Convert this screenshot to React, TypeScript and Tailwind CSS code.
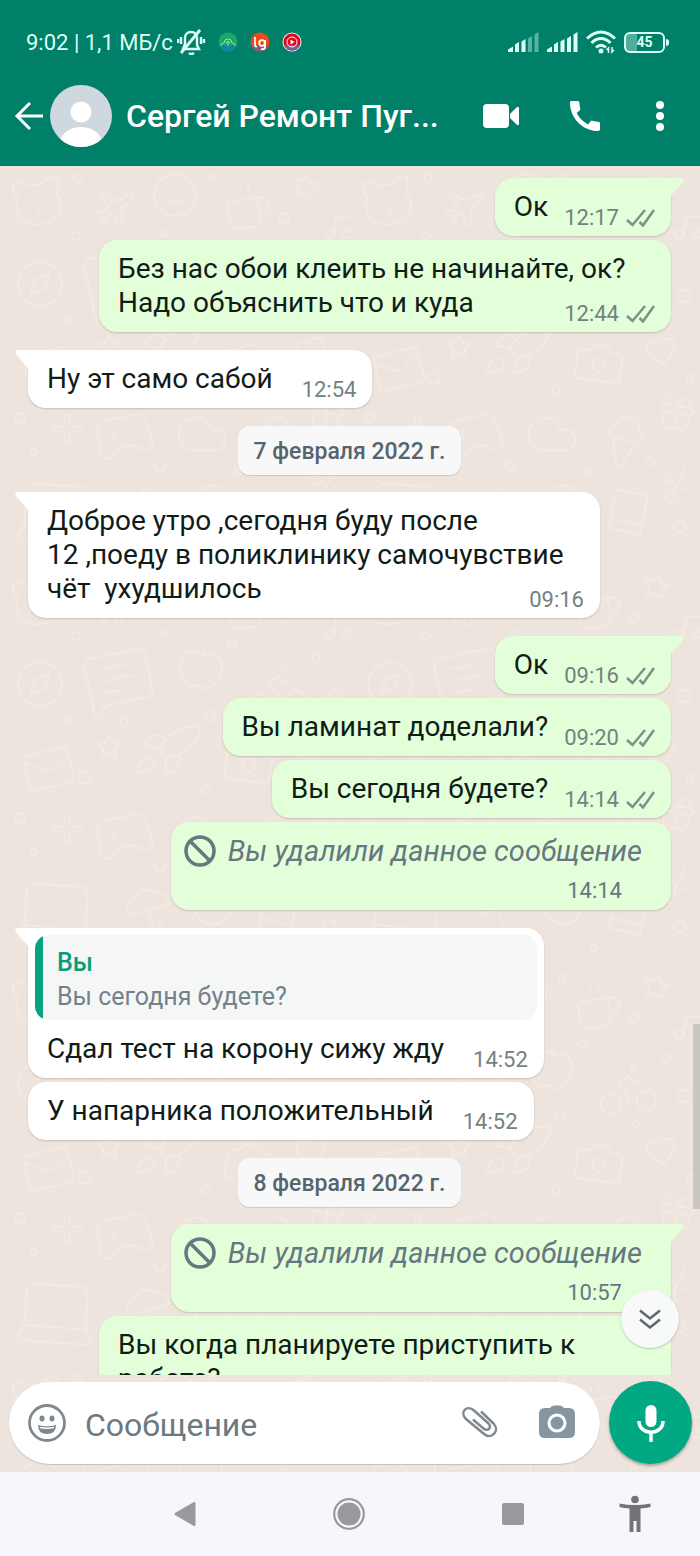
import type { ReactNode } from "react";
import {
  Apple,
  Bike,
  Book,
  Camera,
  Cat,
  Clock,
  Cloud,
  Coffee,
  Compass,
  Gamepad2,
  Gift,
  Heart,
  IceCreamCone,
  Laptop,
  Mail,
  MessageSquareText,
  Music,
  Plane,
  Rocket,
  Scissors,
  Smile,
  Sparkle,
  Star,
  Umbrella,
} from "lucide-react";
import { MdCall } from "react-icons/md";

type Message = {
  kind: "in" | "out" | "deleted" | "date";
  text: string;
  time?: string;
  tail?: boolean;
  wide?: boolean;
  quote?: { author: string; text: string };
};

const messages: Message[] = [
  { kind: "out", text: "Ок", time: "12:17", tail: true },
  { kind: "out", text: "Без нас обои клеить не начинайте, ок?\nНадо объяснить что и куда", time: "12:44", wide: true },
  { kind: "in", text: "Ну эт само сабой", time: "12:54", tail: true },
  { kind: "date", text: "7 февраля 2022 г." },
  {
    kind: "in",
    text: "Доброе утро ,сегодня буду после\n12 ,поеду в поликлинику самочувствие\nчёт  ухудшилось",
    time: "09:16",
    tail: true,
    wide: true,
  },
  { kind: "out", text: "Ок", time: "09:16", tail: true },
  { kind: "out", text: "Вы ламинат доделали?", time: "09:20" },
  { kind: "out", text: "Вы сегодня будете?", time: "14:14" },
  { kind: "deleted", text: "Вы удалили данное сообщение", time: "14:14" },
  {
    kind: "in",
    text: "Сдал тест на корону сижу жду",
    time: "14:52",
    tail: true,
    quote: { author: "Вы", text: "Вы сегодня будете?" },
  },
  { kind: "in", text: "У напарника положительный", time: "14:52" },
  { kind: "date", text: "8 февраля 2022 г." },
  { kind: "deleted", text: "Вы удалили данное сообщение", time: "10:57", tail: true },
  { kind: "out", text: "Вы когда планируете приступить к\nработе?", wide: true },
];

// icon, x, y, size, rotation
const doodles = [
  [Cat, 8, 6, 60, -8],
  [Plane, 92, 20, 44, 12],
  [Smile, 150, 4, 50, 0],
  [Coffee, 222, 16, 52, -10],
  [Star, 292, 6, 28, 10],
  [Music, 322, 44, 34, 8],
  [Compass, 14, 92, 52, 0],
  [MessageSquareText, 82, 78, 74, -12],
  [Apple, 176, 76, 50, 8],
  [Bike, 244, 88, 66, -6],
  [Mail, 22, 176, 54, -14],
  [Star, 96, 168, 26, 0],
  [Rocket, 134, 150, 68, 10],
  [Camera, 222, 170, 54, 8],
  [Heart, 294, 168, 34, -12],
  [Sparkle, 50, 246, 34, 0],
  [Gamepad2, 92, 238, 64, -14],
  [Cloud, 174, 240, 56, 0],
  [IceCreamCone, 244, 246, 60, 14],
  [Gift, 306, 226, 42, 10],
  [Laptop, 10, 300, 92, 4],
  [Umbrella, 122, 316, 52, -14],
  [Clock, 190, 316, 46, 0],
  [Book, 254, 322, 48, 12],
  [Scissors, 308, 300, 38, -20],
] as const;

const dots = [
  [78, 12, 4], [212, 12, 3], [284, 52, 5], [76, 70, 4], [164, 68, 3], [232, 78, 4],
  [316, 92, 4], [334, 130, 6], [70, 154, 3], [124, 156, 4], [210, 150, 5], [286, 158, 3],
  [84, 212, 6], [206, 224, 4], [340, 212, 3], [20, 252, 5], [34, 286, 3], [160, 300, 5],
  [238, 306, 3], [300, 296, 4], [110, 384, 4], [184, 380, 5], [244, 382, 3], [330, 360, 6],
];

function Wallpaper() {
  return (
    <svg className="absolute inset-0 h-full w-full text-[#f3e9e0]" aria-hidden="true">
      <defs>
        <pattern id="doodles" width="350" height="400" patternUnits="userSpaceOnUse">
          {doodles.map(([Icon, x, y, size, angle], i) => (
            <g key={i} transform={`rotate(${angle} ${x + size / 2} ${y + size / 2})`}>
              <Icon x={x} y={y} size={size} strokeWidth={2} absoluteStrokeWidth />
            </g>
          ))}
          {dots.map(([cx, cy, r], i) => (
            <circle key={i} cx={cx} cy={cy} r={r} fill="none" stroke="currentColor" strokeWidth="2" />
          ))}
        </pattern>
      </defs>
      <rect width="100%" height="100%" fill="url(#doodles)" />
    </svg>
  );
}

function Signal({ bars }: { bars: number }) {
  return (
    <svg width="31" height="20" viewBox="0 0 31 20" fill="currentColor">
      {[
        "M0 20v-2.500l5-3V20z",
        "M7 20v-7.500l4-2.500v10z",
        "M13.500 20V9.500l4-2.500v13z",
        "M20 20V6.500L24 4v16z",
        "M26.500 20V2.500l4-2.500v20z",
      ].map((d, i) => (
        <path key={d} d={d} opacity={i < bars ? 1 : 0.4} />
      ))}
    </svg>
  );
}

function StatusBar() {
  return (
    <div className="flex h-[84px] items-center justify-between pr-[31px] pl-[26px] text-[#dcfff5]">
      <div className="flex items-center">
        <span className="text-[22px] whitespace-nowrap">9:02 | 1,1 МБ/с</span>
        <svg className="ml-1" width="30" height="26" viewBox="0 0 30 26" fill="none" stroke="currentColor" strokeWidth="2.400">
          <path d="M8 20h14l-2-4V9c0-3-2-6-6-6s-6 3-6 6v6l-2 5z" />
          <path d="M4 24 23 1" strokeWidth="2.800" />
          <path d="M12 24q2 2 5 0M4 8v7M1 10v4M24 8v7M27 10v4" />
        </svg>
        <div className="ml-[11px] flex gap-3">
          <svg width="20" height="20" viewBox="0 0 20 20">
            <circle cx="10" cy="10" r="9.500" fill="#1da867" />
            <path d="M1 13h18a9.500 9.500 0 0 1-18 0" fill="#0c86a3" />
            <path d="M3 14q0-3 3-3 0-4 4-4t4 4q3 0 3 3M10 14V9m-2 2 2-2 2 2" fill="none" stroke="#8fe3b4" strokeWidth="1" />
          </svg>
          <svg width="20" height="20" viewBox="0 0 20 20">
            <circle cx="10" cy="10" r="9.500" fill="#f04a14" />
            <path d="M1 13h18a9.500 9.500 0 0 1-18 0" fill="#8c5a78" />
            <path d="M5 5v8q0 2 2 1.500M15 8v7q0 3-4 2" fill="none" stroke="#fff" strokeWidth="1.800" />
            <circle cx="12" cy="11" r="2.800" fill="none" stroke="#fff" strokeWidth="1.800" />
          </svg>
          <svg width="20" height="20" viewBox="0 0 20 20">
            <circle cx="10" cy="10" r="9.500" fill="#e8f4f0" />
            <circle cx="10" cy="10" r="8.500" fill="#e3061c" />
            <path d="M2 13h16a8.500 8.500 0 0 1-16 0" fill="#7d5a9a" />
            <circle cx="10" cy="10" r="5" fill="none" stroke="#fff" strokeWidth="1" />
            <path d="m8.500 7.500 4 2.500-4 2.500z" fill="#fff" />
          </svg>
        </div>
      </div>
      <div className="flex items-center gap-2">
        <Signal bars={3} />
        <Signal bars={5} />
        <svg width="30" height="24" viewBox="0 0 30 24" fill="none" stroke="currentColor" strokeWidth="3">
          <path d="M1 8.500Q8 2 15 2t14 6.500M5.500 13Q10 8.500 15 8.500t9.500 4.500M10 17.500q5-4.500 10 0" />
          <circle cx="15" cy="21" r="2.500" fill="currentColor" stroke="none" />
          <path d="M22.500 23v-5l-2 2M26 17v5l2-2" strokeWidth="1.500" />
        </svg>
        <div className="flex items-center gap-px">
          <div className="flex h-[21px] w-[41px] items-center justify-center rounded-md border-2 border-[#dcfff5] bg-linear-to-r from-[#4fae9b] from-30% to-transparent to-30% text-sm font-bold">
            45
          </div>
          <div className="h-[7px] w-[3px] rounded-r bg-[#dcfff5]" />
        </div>
      </div>
    </div>
  );
}

function ChatHeader() {
  return (
    <div className="flex h-16 items-center pr-3 pl-[14px] text-white">
      <button aria-label="Назад" className="shrink-0">
        <svg width="30" height="30" viewBox="0 0 30 30" fill="none" stroke="currentColor" strokeWidth="3">
          <path d="M29 15H3M16 2 3 15l13 13" />
        </svg>
      </button>
      <svg className="ml-1.5 shrink-0" width="62" height="62" viewBox="0 0 62 62">
        <clipPath id="avatar">
          <circle cx="31" cy="31" r="31" />
        </clipPath>
        <g clipPath="url(#avatar)">
          <path d="M0 0h62v62H0z" fill="#cfd8df" />
          <circle cx="31" cy="27" r="10.500" fill="#fff" />
          <ellipse cx="31" cy="58" rx="21" ry="16" fill="#fff" />
        </g>
      </svg>
      <h1 className="ml-[14px] min-w-0 flex-1 truncate text-[32px] leading-10 font-medium">
        Сергей Ремонт Пуг...
      </h1>
      <div className="flex shrink-0 items-center gap-2.5">
        <button aria-label="Видеозвонок" className="flex w-[74px] justify-center">
          <svg width="38" height="24" viewBox="0 0 38 24" fill="currentColor">
            <rect x="1" y="0" width="26" height="24" rx="4" />
            <path d="M28 10 34.500 3.500Q37 1.500 37 4.500v15q0 3-2.500 1L28 14z" />
          </svg>
        </button>
        <button aria-label="Позвонить" className="flex w-[74px] justify-center">
          <MdCall className="size-10" />
        </button>
        <button aria-label="Ещё" className="flex w-14 justify-center">
          <svg width="10" height="30" viewBox="0 0 10 30" fill="currentColor">
            <circle cx="5" cy="4" r="4" />
            <circle cx="5" cy="15" r="4" />
            <circle cx="5" cy="26" r="4" />
          </svg>
        </button>
      </div>
    </div>
  );
}

function Ticks() {
  return (
    <svg width="29" height="18" viewBox="0 0 29 18" fill="none" stroke="#7b9188" strokeWidth="2.500">
      <path d="m1 11 5.500 5L19 1M13.500 13l3.500 3.500L28 1" />
    </svg>
  );
}

type BubbleProps = { out: boolean; tail?: boolean; wide?: boolean; children: ReactNode };

function Bubble({ out, tail, wide, children }: BubbleProps) {
  const color = out ? "bg-[#e3ffd9]" : "bg-white";
  const corner = tail ? (out ? "rounded-tr-none" : "rounded-tl-none") : "";
  return (
    <div
      className={`relative rounded-[18px] shadow-[0_1px_2px_rgba(90,80,60,0.25)] ${color} ${corner} ${
        out ? "self-end" : "self-start"
      } ${wide ? "w-[572px] max-w-full" : ""}`}
    >
      {tail && (
        <svg
          className={`absolute top-0 ${out ? "left-full text-[#e3ffd9]" : "right-full -scale-x-100 text-white"}`}
          width="13"
          height="18"
          viewBox="0 0 13 18"
          fill="currentColor"
        >
          <path d="M0 0h11q3 1 1 4L0 18z" />
        </svg>
      )}
      {children}
    </div>
  );
}

function Row({ message }: { message: Message }) {
  const { kind, text, time, tail, wide, quote } = message;

  if (kind === "date") {
    return (
      <div className="mt-3.5 mb-[-1px] flex h-[49px] items-center self-center rounded-xl bg-[#f7f8f7] px-4 pt-[3px] text-[23px] font-medium text-[#54656f] shadow-[0_1px_1px_rgba(90,80,60,0.2)]">
        {text}
      </div>
    );
  }

  if (kind === "deleted") {
    return (
      <Bubble out tail={tail}>
        <div className="flex flex-col pt-3 pr-[29px] pb-[7px] pl-[13px] text-[#667781]">
          <div className="flex h-[34px] items-center gap-3">
            <svg width="32" height="32" viewBox="0 0 32 32" fill="none" stroke="currentColor" strokeWidth="3.500">
              <circle cx="16" cy="16" r="14" />
              <path d="m6 6 20 20" />
            </svg>
            <span className="text-[29px] leading-[34px] italic">{text}</span>
          </div>
          <time className="mt-[11px] mr-5 self-end text-[22px] leading-6">{time}</time>
        </div>
      </Bubble>
    );
  }

  const out = kind === "out";

  return (
    <Bubble out={out} tail={tail} wide={wide}>
      {quote && (
        <div className="px-[7px] pt-[7px]">
          <blockquote className="flex h-[85px] overflow-hidden rounded-[14px] bg-[#f5f7f7]">
            <div className="w-2 bg-[#06a37f]" />
            <div className="flex flex-col pt-[11px] pl-3.5 text-[25px] leading-[34px]">
              <span className="font-medium text-[#0a9b79]">{quote.author}</span>
              <span className="text-[#74818a]">{quote.text}</span>
            </div>
          </blockquote>
        </div>
      )}
      <div className="py-3 pr-4 pl-[19px] text-[28px] leading-[34px] whitespace-pre-wrap text-[#0f1c18]">
        {text}
        {time && (
          <span
            className={`float-right mt-4 -mb-1.5 flex items-center gap-[7px] text-[22px] leading-6 text-[#72827f] ${
              out ? "ml-4" : "ml-[29px]"
            }`}
          >
            <time>{time}</time>
            {out && <Ticks />}
          </span>
        )}
      </div>
    </Bubble>
  );
}

function Composer() {
  return (
    <form className="relative flex items-center gap-[9px] pt-1.5 pr-2 pb-2 pl-[9px]">
      <div className="flex h-[82px] min-w-0 flex-1 items-center rounded-full bg-white pr-6 pl-[18px] text-[#7d898f] shadow-[0_1px_1px_rgba(90,80,60,0.25)]">
        <button type="button" aria-label="Эмодзи" className="shrink-0">
          <svg width="40" height="40" viewBox="0 0 40 40" fill="none" stroke="currentColor" strokeWidth="2.800">
            <circle cx="20" cy="20" r="17.500" />
            <path d="M11 22q9 2.500 18 0 0 9-9 9t-9-9z" fill="currentColor" stroke="none" />
            <path d="M13 24.500q7 1.500 14 0" stroke="#fff" strokeWidth="1.500" />
            <ellipse cx="15" cy="15.500" rx="2.500" ry="3" fill="currentColor" stroke="none" />
            <ellipse cx="25" cy="15.500" rx="2.500" ry="3" fill="currentColor" stroke="none" />
          </svg>
        </button>
        <input
          aria-label="Сообщение"
          placeholder="Сообщение"
          className="ml-[18px] min-w-0 flex-1 bg-transparent pt-1 text-[32px] outline-none placeholder:text-[#6c7980]"
        />
        <button type="button" aria-label="Прикрепить" className="shrink-0">
          <svg width="40" height="40" viewBox="0 0 40 40" fill="none" stroke="currentColor" strokeWidth="2.500">
            <path d="M21 7.500 33.500 19.500c7 7.500-2.500 17-10 10L6 15C-1 8 7 .5 14 6.500L28 19c5 4.500-.5 9-4.500 5.500L13 15.500" transform="translate(0 1)" />
          </svg>
        </button>
        <button type="button" aria-label="Камера" className="ml-[38px] shrink-0">
          <svg width="38" height="38" viewBox="0 0 38 38" fill="#8696a0">
            <path d="M12 4q1.500-2.500 4-2.500h6q2.500 0 4 2.500h5q6 0 6 6v18q0 6-6 6H7q-6 0-6-6V10q0-6 6-6z" />
            <circle cx="19" cy="19" r="8" stroke="#fff" strokeWidth="3" />
          </svg>
        </button>
      </div>
      <button
        type="button"
        aria-label="Голосовое сообщение"
        className="flex size-[83px] shrink-0 items-center justify-center rounded-full bg-[#00a884] text-white shadow-[0_2px_3px_rgba(60,60,50,0.4)]"
      >
        <svg width="28" height="38" viewBox="0 0 28 38" fill="none" stroke="currentColor" strokeWidth="3.500">
          <rect x="8.500" y="1" width="11" height="22" rx="5.500" fill="currentColor" stroke="none" />
          <path d="M2 17c0 15 24 15 24 0M14 28v10" />
        </svg>
      </button>
    </form>
  );
}

function NavBar() {
  return (
    <nav className="flex h-[84px] shrink-0 items-center bg-[#f6f7fa] pr-6 pl-36 text-[#98999c]">
      <div className="flex items-center gap-[82px]">
        <button aria-label="Назад" className="flex w-[82px] justify-center">
          <svg width="22" height="26" viewBox="0 0 22 26" fill="currentColor">
            <path d="M20 1q1-.5 1.500 1v22q-.5 1.500-1.500 1L1 14q-1-1 0-2z" />
          </svg>
        </button>
        <button aria-label="Домой" className="flex w-[82px] justify-center">
          <svg width="32" height="32" viewBox="0 0 32 32">
            <circle cx="16" cy="16" r="14.800" fill="none" stroke="currentColor" strokeWidth="2.200" />
            <circle cx="16" cy="16" r="11.500" fill="currentColor" />
          </svg>
        </button>
        <button aria-label="Недавние" className="flex w-[82px] justify-center">
          <span className="size-[22px] rounded-xs bg-[#98999c]" />
        </button>
      </div>
      <button aria-label="Специальные возможности" className="ml-auto flex w-[82px] justify-center text-[#737477]">
        <svg width="32" height="38" viewBox="0 0 32 38" fill="currentColor">
          <circle cx="16" cy="4.500" r="3.800" />
          <path d="M.5 8.500Q16 11.500 31.500 8.500v3.500q-5 1-10 1.500V37h-4V26h-3v11h-4V13.500Q5 13 .5 12z" />
        </svg>
      </button>
    </nav>
  );
}

export default function App() {
  return (
    <div className="flex h-screen flex-col font-[Roboto,'Noto_Sans',sans-serif]">
      <header className="shrink-0 bg-[#008069] pb-[18px]">
        <StatusBar />
        <ChatHeader />
      </header>

      <div className="relative flex min-h-0 flex-1 flex-col bg-[#ede4dd]">
        <Wallpaper />

        {/* Message list, the last bubble runs under the composer */}
        <main className="relative min-h-0 flex-1 overflow-hidden">
          <div className="flex flex-col gap-1 pt-3 pr-[29px] pl-7">
            {messages.map((message, i) => {
              const newGroup = i > 0 && message.tail;
              return (
                <div key={i} className={`flex flex-col ${newGroup ? "pt-3.5" : ""}`}>
                  <Row message={message} />
                </div>
              );
            })}
          </div>

          {/* Scrollbar thumb */}
          <div className="absolute top-[71%] right-0 h-[185px] w-[7px] bg-[#c9c7c0]" />

          <button
            aria-label="Вниз"
            className="absolute right-[21px] bottom-[27px] flex size-[58px] items-center justify-center rounded-full bg-[#f8f9f9] text-[#5b6870] shadow-[0_1px_2px_rgba(90,80,60,0.3)]"
          >
            <svg width="22" height="20" viewBox="0 0 22 20" fill="none" stroke="currentColor" strokeWidth="2.500">
              <path d="m1 1.500 10 8 10-8M1 10.500l10 8 10-8" />
            </svg>
          </button>
        </main>

        <Composer />
      </div>

      <NavBar />
    </div>
  );
}
